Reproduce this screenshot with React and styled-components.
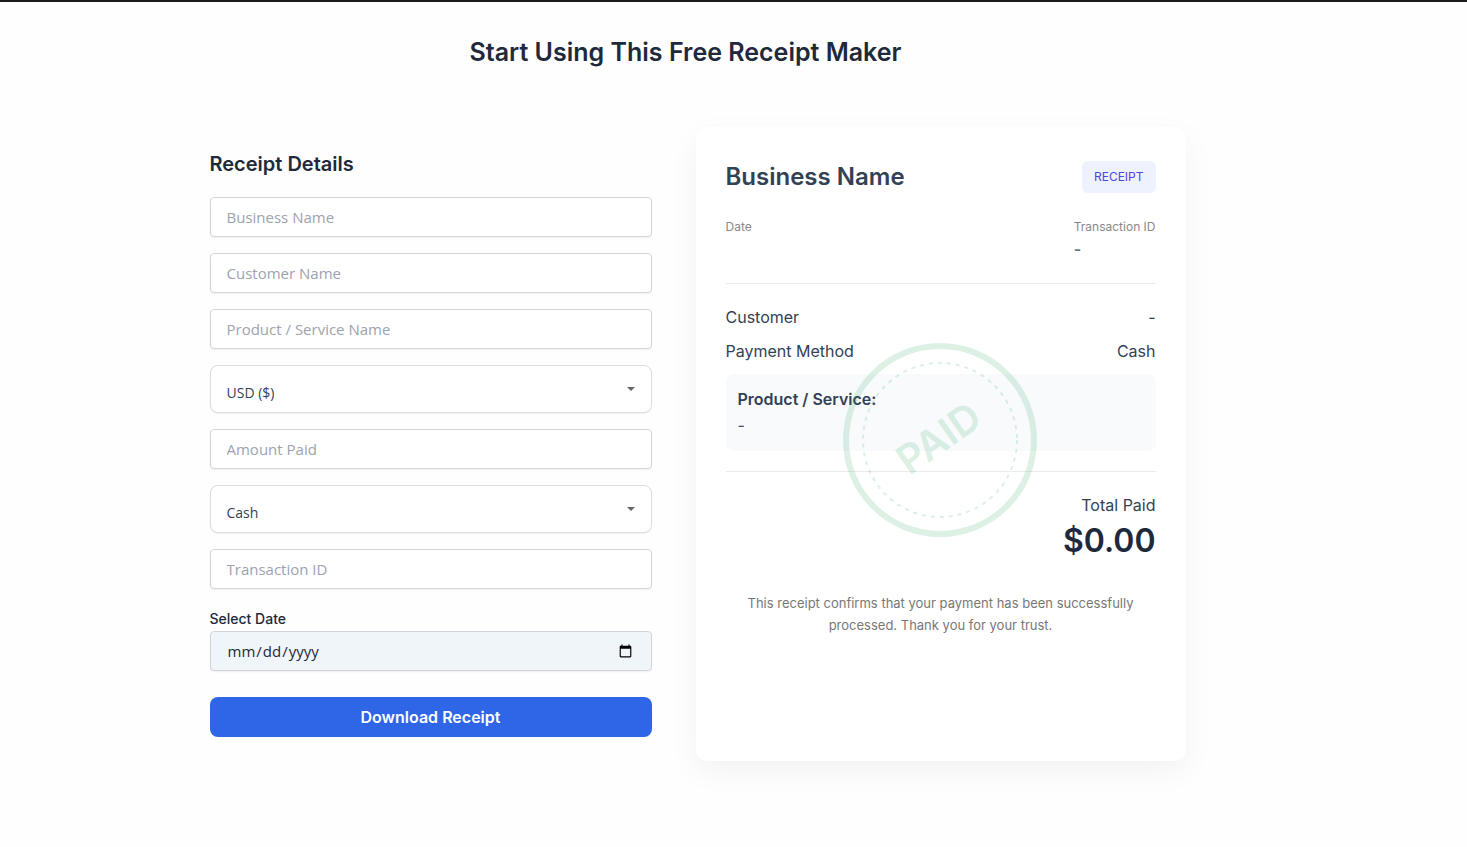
import React, { useState } from "react";
import styled, { createGlobalStyle } from "styled-components";

const GlobalStyle = createGlobalStyle`
  *, *::before, *::after { box-sizing: border-box; }
  body {
    margin: 0;
    background: #fefefe;
    color: #334155;
    font-family: Inter, "Liberation Sans", sans-serif;
    font-size: 16px;
  }
  h1, h2, p, dl, dt, dd { margin: 0; font-weight: 400; }
`;

const Page = styled.main`
  min-height: 100vh;
  border-top: 2px solid #1b1b1b;
  padding: 32px 96px 48px 0;
`;

const Title = styled.h1`
  font-size: 25px;
  font-weight: 600;
  line-height: 36px;
  text-align: center;
  color: #1e293b;
`;

const Columns = styled.div`
  display: grid;
  grid-template-columns: repeat(auto-fit, minmax(340px, 1fr));
  gap: 20px;
  max-width: 1000px;
  margin: 57px auto 0;
`;

const Form = styled.form`
  display: flex;
  flex-direction: column;
  gap: 16px;
  padding: 24px;
`;

const FormTitle = styled.h2`
  margin-bottom: 4px;
  font-size: 20px;
  font-weight: 600;
  line-height: 26px;
  color: #1e293b;
`;

const Input = styled.input`
  display: block;
  width: 100%;
  height: 40px;
  padding: 0 16px;
  border: 1px solid #d1d5db;
  border-radius: 4px;
  background: ${(p) => (p.$tinted ? "#f0f5f9" : "#ffffff")};
  box-shadow: 0 1px 2px rgba(0, 0, 0, 0.06);
  color: #1e293b;
  font-family: "Open Sans", "Noto Sans", sans-serif;
  font-size: 15px;
  &::placeholder { color: #9ca3af; opacity: 1; }
`;

const SelectBox = styled.div`
  display: grid;
  align-items: center;
  & > * { grid-area: 1 / 1; }
`;

const Select = styled.select`
  appearance: none;
  width: 100%;
  height: 48px;
  padding: 6px 40px 0 16px;
  border: 1px solid #dcdee2;
  border-radius: 8px;
  background: #ffffff;
  box-shadow: 0 1px 2px rgba(0, 0, 0, 0.06);
  color: #334155;
  font-family: "Open Sans", "Noto Sans", sans-serif;
  font-size: 14px;
`;

const Caret = styled.svg`
  justify-self: end;
  width: 8px;
  height: 4px;
  margin-right: 17px;
  fill: #666666;
  pointer-events: none;
`;

const DateLabel = styled.label`
  display: block;
  padding-top: 2px;
  font-size: 14px;
  font-weight: 500;
  line-height: 24px;
  color: #1e293b;
`;

const DownloadButton = styled.button`
  height: 40px;
  margin-top: 10px;
  border: 0;
  border-radius: 8px;
  background: #2f66e7;
  color: #ffffff;
  font-family: inherit;
  font-size: 16px;
  font-weight: 600;
  cursor: pointer;
`;

const Card = styled.section`
  position: relative;
  padding: 30px;
  border-radius: 12px;
  background: #ffffff;
  box-shadow: 0 10px 30px rgba(0, 0, 0, 0.05);
`;

const CardHeader = styled.header`
  display: flex;
  align-items: center;
  justify-content: space-between;
  height: 40px;
`;

const Business = styled.h2`
  font-size: 24px;
  font-weight: 600;
  line-height: 28px;
  color: #334155;
`;

const Badge = styled.span`
  padding: 0 12px;
  border-radius: 6px;
  background: #eef2ff;
  color: #4f46e5;
  font-size: 12px;
  line-height: 32px;
`;

const Meta = styled.dl`
  display: flex;
  justify-content: space-between;
  padding: 19px 0 23px;
  border-bottom: 1px solid #ebebeb;
  dt { font-size: 12px; line-height: 22px; color: #888888; }
  dd { min-height: 22px; font-size: 16px; font-weight: 600; line-height: 22px; color: #64748b; }
`;

const Rows = styled.dl`
  padding-top: 16px;
`;

const Row = styled.div`
  display: flex;
  justify-content: space-between;
  line-height: 34px;
`;

const Product = styled.div`
  margin: 6px 0 20px;
  padding: 12px;
  border-radius: 8px;
  background: #f8fafc;
  strong { display: block; font-weight: 600; line-height: 26px; color: #334155; }
  p { line-height: 27px; color: #475569; }
`;

const Total = styled.div`
  padding-top: 19px;
  border-top: 1px solid #ebebeb;
  text-align: right;
  line-height: 28px;
`;

const Amount = styled.p`
  font-size: 32px;
  font-weight: 600;
  line-height: 44px;
  color: #1e293b;
`;

const Note = styled.p`
  max-width: 400px;
  margin: 29px auto 0;
  font-size: 13px;
  line-height: 22px;
  text-align: center;
  color: #777777;
`;

const Stamp = styled.svg`
  position: absolute;
  top: 216px;
  left: 50%;
  width: 194px;
  height: 194px;
  margin-left: -98px;
  opacity: 0.15;
  pointer-events: none;
  circle { fill: none; stroke: #22a052; }
  text {
    fill: #22a052;
    font-family: Inter, sans-serif;
    font-size: 40px;
    font-weight: 600;
    text-anchor: middle;
  }
`;

function Dropdown({ label, value, onChange, options }) {
  return (
    <SelectBox>
      <Select aria-label={label} value={value} onChange={onChange}>
        {options.map((o) => <option key={o}>{o}</option>)}
      </Select>
      <Caret viewBox="0 0 8 4" aria-hidden="true"><path d="M0 0h8L4 4z" /></Caret>
    </SelectBox>
  );
}

export default function App() {
  const [data, setData] = useState({
    business: "", customer: "", product: "", currency: "USD ($)",
    amount: "", method: "Cash", transaction: "", date: "",
  });
  const bind = (key) => ({
    value: data[key],
    onChange: (e) => setData({ ...data, [key]: e.target.value }),
  });
  const field = (key, label) => (
    <Input aria-label={label} placeholder={label} {...bind(key)} />
  );
  const symbol = data.currency.match(/\((.+)\)/)[1];

  return (
    <>
      <GlobalStyle />
      <Page>
        <Title>Start Using This Free Receipt Maker</Title>
        <Columns>
          <Form onSubmit={(e) => { e.preventDefault(); window.print(); }}>
            <FormTitle>Receipt Details</FormTitle>
            {field("business", "Business Name")}
            {field("customer", "Customer Name")}
            {field("product", "Product / Service Name")}
            <Dropdown label="Currency" options={["USD ($)", "EUR (€)", "GBP (£)"]} {...bind("currency")} />
            {field("amount", "Amount Paid")}
            <Dropdown label="Payment method" options={["Cash", "Card", "Bank Transfer"]} {...bind("method")} />
            {field("transaction", "Transaction ID")}
            <div>
              <DateLabel htmlFor="date">Select Date</DateLabel>
              <Input id="date" type="date" $tinted {...bind("date")} />
            </div>
            <DownloadButton type="submit">Download Receipt</DownloadButton>
          </Form>

          <Card>
            <CardHeader>
              <Business>{data.business || "Business Name"}</Business>
              <Badge>RECEIPT</Badge>
            </CardHeader>
            <Meta>
              <div><dt>Date</dt><dd>{data.date}</dd></div>
              <div><dt>Transaction ID</dt><dd>{data.transaction || "-"}</dd></div>
            </Meta>
            <Rows>
              <Row><dt>Customer</dt><dd>{data.customer || "-"}</dd></Row>
              <Row><dt>Payment Method</dt><dd>{data.method}</dd></Row>
            </Rows>
            <Product>
              <strong>Product / Service:</strong>
              <p>{data.product || "-"}</p>
            </Product>
            <Total>
              <p>Total Paid</p>
              <Amount>{symbol}{Number(data.amount || 0).toFixed(2)}</Amount>
            </Total>
            <Note>
              This receipt confirms that your payment has been successfully
              processed. Thank you for your trust.
            </Note>
            <Stamp viewBox="0 0 194 194" role="img" aria-label="Paid">
              <circle cx="97" cy="97" r="94" strokeWidth="6" />
              <circle cx="97" cy="97" r="77" strokeWidth="2" strokeDasharray="4 5" />
              <text x="97" y="109" transform="rotate(-35 97 97)">PAID</text>
            </Stamp>
          </Card>
        </Columns>
      </Page>
    </>
  );
}
